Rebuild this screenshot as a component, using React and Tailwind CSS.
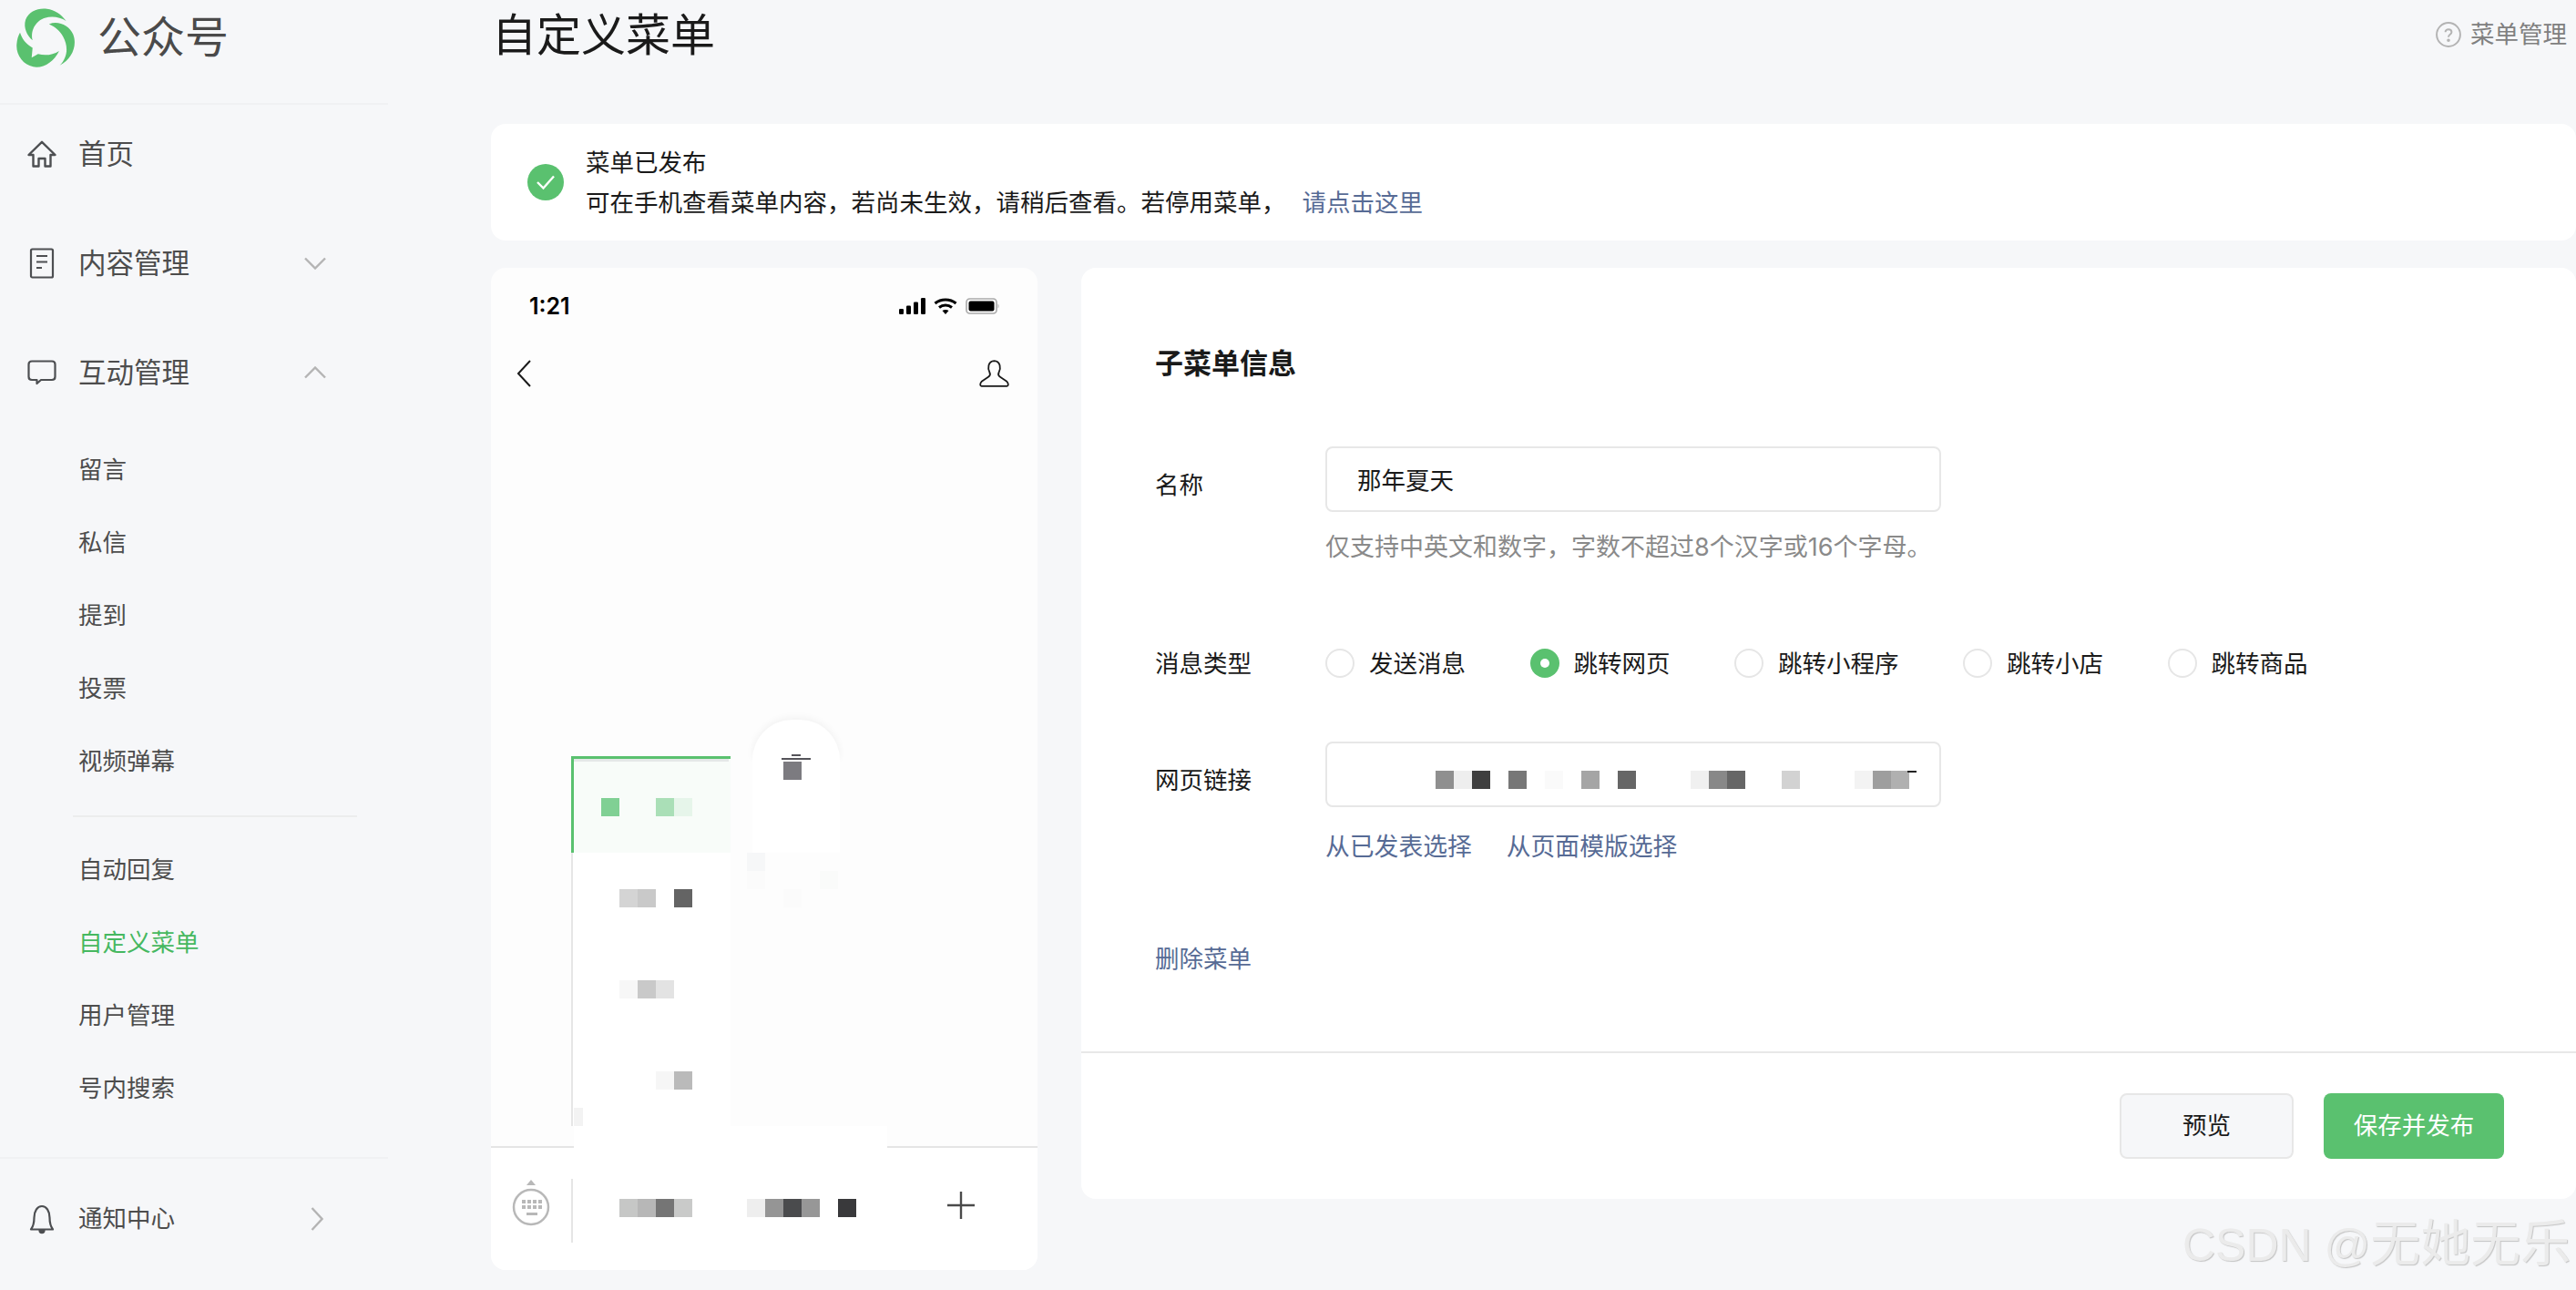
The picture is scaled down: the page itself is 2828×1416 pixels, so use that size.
const subItems = ['留言', '私信', '提到', '投票', '视频弹幕'];
const subItems2 = ['自动回复', '自定义菜单', '用户管理', '号内搜索'];
const radios = [
  { label: '发送消息' },
  { label: '跳转网页', checked: true },
  { label: '跳转小程序' },
  { label: '跳转小店' },
  { label: '跳转商品' },
];

function Logo() {
  return (
    <svg viewBox="50 25 200 200" className="w-[67px] h-[67px] shrink-0 fill-[#5ac16f]">
      <path d="M106 133C88 118 75 92 83 66 93 38 125 26 153 30 178 33 200 47 216 70 196 57 170 53 146 60 122 67 97 96 106 133Z" />
      <path d="M160 80C190 68 226 84 239 114 253 150 236 195 195 215 221 190 224 153 206 121 197 103 180 89 160 80Z" />
      <path d="M65 108C70 126 84 146 106 158L103 190 124 178C146 184 172 182 193 168 176 203 142 226 108 220 74 213 51 180 54 146 55 131 59 119 65 108Z" />
    </svg>
  );
}

function HomeIcon() {
  return (
    <svg viewBox="0 0 32 30" className="w-8 h-[30px] fill-none stroke-[#4d4f52] stroke-[2.4]">
      <path d="M1.5 16 16 1.8 30.5 16H25.5V28.5H19.5V20H12.5V28.5H6.5V16Z" strokeLinejoin="round" />
    </svg>
  );
}

function DocIcon() {
  return (
    <svg viewBox="0 0 28 34" className="w-7 h-[34px] fill-none stroke-[#4d4f52] stroke-[2.2]">
      <rect x="2" y="1.5" width="24" height="31" rx="1.5" />
      <path d="M8 9H20M8 15.5H20M8 22H14" />
    </svg>
  );
}

function ChatIcon() {
  return (
    <svg viewBox="0 0 32 28" className="w-8 h-7 fill-none stroke-[#4d4f52] stroke-[2.2]">
      <path d="M5 1.5H27C29 1.5 30.5 3 30.5 5V18.5C30.5 20.5 29 22 27 22H15L10.5 26V22H5C3 22 1.5 20.5 1.5 18.5V5C1.5 3 3 1.5 5 1.5Z" strokeLinejoin="round" />
    </svg>
  );
}

function BellIcon() {
  return (
    <svg viewBox="0 0 28 33" className="w-7 h-[33px] fill-none stroke-[#4d4f52] stroke-[2.2]">
      <path d="M2 27.5C5 23.5 5.5 20 5.5 14.5 5.5 7.5 9 2 14 2S22.5 7.5 22.5 14.5C22.5 20 23 23.5 26 27.5Z" strokeLinejoin="round" />
      <path d="M11.5 28.5C11.5 32 16.5 32 16.5 28.5Z" className="fill-[#4d4f52]" />
    </svg>
  );
}

function Chevron({ d, w, h }) {
  return (
    <svg viewBox={`0 0 ${w} ${h}`} width={w} height={h} className="fill-none stroke-[#b4b4b4] stroke-[2.4]">
      <path d={d} />
    </svg>
  );
}

function NavRow({ icon, label, arrow, small }) {
  return (
    <div className="h-20 flex items-center relative">
      <div className="w-[86px] shrink-0 pl-[30px]">
        <div className="w-8 flex justify-center">{icon}</div>
      </div>
      <span className={small ? 'text-[26.5px] text-[#4d4d4d]' : 'text-[30.5px] text-[#4d4d4d]'}>{label}</span>
      <div className="absolute left-[334px] top-0 bottom-0 flex items-center">{arrow}</div>
    </div>
  );
}

function SubRow({ label }) {
  const active = label === '自定义菜单';
  return (
    <div className={active ? 'h-20 pl-[86px] flex items-center text-[26.5px] text-[#46b860]' : 'h-20 pl-[86px] flex items-center text-[26.5px] text-[#4d4d4d]'}>
      {label}
    </div>
  );
}

function Sidebar() {
  return (
    <aside className="w-[539px] shrink-0">
      <div className="w-[426px] h-[115px] border-b-2 border-[#f0f1f3] pl-[17px] pt-[8px] flex items-start gap-[23px]">
        <Logo />
        <span className="text-[48px] leading-[60px] mt-[3px] text-[#4a4a4a]">公众号</span>
      </div>
      <div className="w-[426px] pt-[14px]">
        <NavRow icon={<HomeIcon />} label="首页" />
        <div className="h-10" />
        <NavRow icon={<DocIcon />} label="内容管理" arrow={<Chevron w={24} h={14} d="M1 1.5 12 12.5 23 1.5" />} />
        <div className="h-10" />
        <NavRow icon={<ChatIcon />} label="互动管理" arrow={<Chevron w={24} h={14} d="M1 12.5 12 1.5 23 12.5" />} />
        <div className="h-[27px]" />
        {subItems.map((s) => <SubRow key={s} label={s} />)}
        <div className="ml-[80px] w-[312px] h-[2px] bg-[#eceded] mt-[19px] mb-[18px]" />
        {subItems2.map((s) => <SubRow key={s} label={s} />)}
        <div className="h-[2px] bg-[#f0f1f3] mt-[35px] mb-[26px]" />
        <NavRow small icon={<BellIcon />} label="通知中心" arrow={<div className="ml-[7px]"><Chevron w={14} h={26} d="M1.5 1 12.5 13 1.5 25" /></div>} />
      </div>
    </aside>
  );
}

// one blurred patch of the screenshot: a run of 20px squares, null leaves a gap
function Mosaic({ cells }) {
  return (
    <div className="flex">
      {cells.map((c, i) => <div key={i} className={`w-5 h-5 ${c || ''}`} />)}
    </div>
  );
}

function StatusIcons() {
  return (
    <div className="flex items-center gap-[9px]">
      <svg viewBox="0 0 29 18" className="w-[29px] h-[18px] fill-black">
        <rect x="0" y="12" width="5" height="6" rx="1.2" />
        <rect x="8" y="8.5" width="5" height="9.5" rx="1.2" />
        <rect x="16" y="4.5" width="5" height="13.5" rx="1.2" />
        <rect x="24" y="0" width="5" height="18" rx="1.2" />
      </svg>
      <svg viewBox="0 0 26 18" className="w-[26px] h-[18px] fill-none stroke-black stroke-[3]">
        <path d="M1.5 6C8 0.5 18 0.5 24.5 6" />
        <path d="M6 10.5C10 7.2 16 7.2 20 10.5" />
        <path d="M13 18 9.5 14C11.5 12.7 14.5 12.7 16.5 14Z" className="fill-black stroke-none" />
      </svg>
      <svg viewBox="0 0 37 18" className="w-[37px] h-[18px]">
        <rect x="1" y="1" width="33" height="16" rx="3.5" className="fill-none stroke-[#a9a9a9] stroke-[1.6]" />
        <rect x="3.5" y="3.5" width="28" height="11" rx="2" className="fill-black" />
        <path d="M35.5 6.5C37 7.5 37 10.5 35.5 11.5Z" className="fill-[#b5b5b5]" />
      </svg>
    </div>
  );
}

function SubMenu() {
  return (
    <div className="absolute left-[88px] top-[400px] w-[175px]">
      <div className="h-[106px] border-t-[3px] border-l-[3px] border-[#5ac16f] bg-[#f8fcf9]">
        <div className="h-[3px] w-[170px] bg-[#e5e8e8]" />
        <div className="pl-[30px] pt-[40px]">
          <Mosaic cells={['bg-[#80d094]', null, null, 'bg-[#aadfb7]', 'bg-[#e6f5ea]']} />
        </div>
      </div>
      <div className="h-[100px] border-l-2 border-[#e6e6e6] bg-white pl-[31px] pt-[40px]">
        <Mosaic cells={[null, 'bg-[#d4d4d4]', 'bg-[#c9c9c9]', null, 'bg-[#646464]']} />
      </div>
      <div className="h-[100px] border-l-2 border-[#e6e6e6] bg-white pl-[31px] pt-[40px]">
        <Mosaic cells={[null, 'bg-[#f7f7f7]', 'bg-[#c9c9c9]', 'bg-[#e3e3e3]']} />
      </div>
      <div className="h-[100px] border-l-2 border-[#e6e6e6] bg-white pl-[31px] pt-[40px] relative">
        <Mosaic cells={[null, null, null, 'bg-[#f6f6f6]', 'bg-[#bababa]']} />
        <div className="absolute left-[1px] bottom-0 w-[10px] h-5 bg-[#f3f3f3]" />
      </div>
    </div>
  );
}

function DeleteBubble() {
  return (
    <div className="absolute left-[287px] top-[360px] w-[96px]">
      <div className="h-[44px] rounded-t-[48px] bg-white shadow-[0_-2px_8px_rgba(0,0,0,0.05)] pt-[38px] flex flex-col items-center">
        <div className="w-[10px] h-[2px] bg-[#55545a]" />
        <div className="w-[32px] h-[2px] mt-[2px] bg-[#55545a]" />
      </div>
      <div className="h-[102px] bg-white pt-[2px] pl-[34px]">
        <div className="w-5 h-5 bg-[#7c7b80]" />
      </div>
      <div className="-ml-[6px]">
        <Mosaic cells={['bg-[#f6f7f8]']} />
        <Mosaic cells={['bg-[#fbfbfb]', null, null, null, 'bg-[#fafbfa]']} />
        <Mosaic cells={[null, null, 'bg-[#fbfbfb]']} />
      </div>
    </div>
  );
}

function Phone() {
  return (
    <div className="w-[600px] h-[1100px] shrink-0 rounded-2xl bg-[#fdfdfd] overflow-hidden flex flex-col">
      <div className="h-10 mt-[23px] px-[42px] flex items-center justify-between">
        <span className="text-[25px] font-semibold text-black font-['Inter',sans-serif]">1:21</span>
        <div className="-mt-[2px]"><StatusIcons /></div>
      </div>
      <div className="h-10 mt-[33px] pl-[28px] pr-[31px] flex items-center justify-between">
        <svg viewBox="0 0 16 32" className="w-4 h-8 fill-none stroke-[#1a1a1a] stroke-[2]">
          <path d="M15 2 2 16 15 30" />
        </svg>
        <svg viewBox="0 0 33 30" className="w-[33px] h-[30px] fill-none stroke-[#1a1a1a] stroke-[1.8]" strokeLinejoin="round">
          <path d="M11.5 14C9 9.5 9.5 1.5 16.5 1.2 23.5 1.5 24 9.5 21.5 14 20.5 16 21 17.5 23 18.8L30 23.5C32 25 32.5 28.8 30.5 28.8H2.5C0.5 28.8 1 25 3 23.5L10 18.8C12 17.5 12.5 16 11.5 14Z" />
        </svg>
      </div>
      <div className="flex-1 relative z-10">
        <SubMenu />
        <DeleteBubble />
        <div className="absolute left-[91px] -bottom-[2px] w-[344px] h-[24px] bg-white" />
      </div>
      <div className="h-[136px] bg-white border-t-2 border-[#e5e5e5] flex items-start">
        <svg viewBox="0 0 44 56" className="w-[44px] h-14 ml-[22px] mt-[34px]">
          <path d="M17 7 22 1 27 7Z" className="fill-[#b8b8b8]" />
          <circle cx="22" cy="31" r="19" className="fill-white stroke-[#b8b8b8] stroke-[2.5]" />
          <path d="M12 23h4v4h-4zM18 23h4v4h-4zM24 23h4v4h-4zM30 23h4v4h-4zM12 29h4v4h-4zM18 29h4v4h-4zM24 29h4v4h-4zM30 29h4v4h-4zM17 37h12v3h-12z" className="fill-[#b8b8b8]" />
        </svg>
        <div className="w-[2px] h-[70px] mt-[34px] ml-[22px] bg-[#e5e5e5]" />
        <div className="mt-[56px] ml-[51px]">
          <Mosaic cells={['bg-[#c6c7c6]', 'bg-[#b7b7b7]', 'bg-[#757575]', 'bg-[#c9cac9]']} />
        </div>
        <div className="mt-[56px] ml-[60px]">
          <Mosaic cells={['bg-[#eeeeee]', 'bg-[#959595]', 'bg-[#4a4b4d]', 'bg-[#979797]', null, 'bg-[#39393b]']} />
        </div>
        <svg viewBox="0 0 30 30" className="w-[30px] h-[30px] ml-[100px] mt-[48px] stroke-[#4a4a4a] stroke-[2.4]">
          <path d="M15 0V30M0 15H30" />
        </svg>
      </div>
    </div>
  );
}

function Field({ label, children, className }) {
  return (
    <div className={`flex items-start ${className}`}>
      <div className="w-[187px] shrink-0 mt-[22px] leading-10 text-[#1a1a1a]">{label}</div>
      {children}
    </div>
  );
}

function Editor() {
  return (
    <div className="flex-1 h-[1022px] rounded-2xl bg-white flex flex-col text-[26.5px]">
      <div className="flex-1 pl-[81px] pt-[84px]">
        <div className="leading-[42px] text-[31px] font-semibold text-[#1a1a1a]">子菜单信息</div>
        <Field label="名称" className="mt-[70px]">
          <div className="w-[676px] h-[72px] border-2 border-[#e7e7e7] rounded-lg pl-[33px] pt-[4px] flex items-center text-[#1a1a1a]">那年夏天</div>
        </Field>
        <div className="ml-[187px] mt-[19px] leading-10 text-[27px] text-[#8a8a8a]">仅支持中英文和数字，字数不超过8个汉字或16个字母。</div>
        <div className="flex items-center mt-[88px] h-10">
          <div className="w-[187px] shrink-0 text-[#1a1a1a]">消息类型</div>
          <div className="flex items-center gap-[70.5px] -mt-[2px]">
            {radios.map((r) => (
              <label key={r.label} className="flex items-center gap-4 text-[#1a1a1a]">
                {r.checked ? (
                  <span className="w-8 h-8 rounded-full bg-[#5ac16f] flex items-center justify-center">
                    <span className="w-[10px] h-[10px] rounded-full bg-white" />
                  </span>
                ) : (
                  <span className="w-8 h-8 rounded-full border-2 border-[#e6e6e6] bg-white" />
                )}
                <span className="mt-[2px]">{r.label}</span>
              </label>
            ))}
          </div>
        </div>
        <Field label="网页链接" className="mt-[65px]">
          <div className="w-[676px] h-[72px] border-2 border-[#e7e7e7] rounded-lg pl-[119px] pt-[30px] relative">
            <Mosaic cells={['bg-[#8f8f8f]', 'bg-[#eeeeee]', 'bg-[#3f3f3f]', null, 'bg-[#777777]', null, 'bg-[#fafafa]', null, 'bg-[#a5a5a5]', null, 'bg-[#666666]', null, null, null, 'bg-[#f0f0f0]', 'bg-[#888888]', 'bg-[#666666]', null, null, 'bg-[#d2d2d2]', null, null, null, 'bg-[#f3f3f3]', 'bg-[#9e9e9e]', 'bg-[#b0b0b0]']} />
            <div className="absolute left-[637px] top-[30px] w-[10px] h-[2px] bg-[#222222]" />
          </div>
        </Field>
        <div className="ml-[187px] mt-[23px] leading-10 flex gap-[38px] text-[26.8px] text-[#576b95]">
          <span>从已发表选择</span>
          <span>从页面模版选择</span>
        </div>
        <div className="mt-[83px] leading-10 text-[#576b95]">删除菜单</div>
      </div>
      <div className="h-[162px] border-t-2 border-[#e8e8e8] pt-[44px] pr-[79px] flex justify-end gap-[33px]">
        <button className="w-[191px] h-[72px] rounded-lg border-2 border-[#e7e7e7] bg-[#f6f7f9] text-[#1a1a1a]">预览</button>
        <button className="w-[198px] h-[72px] rounded-lg bg-[#5ac16f] text-white">保存并发布</button>
      </div>
    </div>
  );
}

export default function App() {
  return (
    <div className="relative w-[2828px] h-[1416px] overflow-hidden flex bg-[#f6f7f9] font-['Inter','Noto_Sans_CJK_SC',sans-serif]">
      <Sidebar />
      <main className="flex-1 flex flex-col">
        <header className="h-[136px] flex items-start justify-between pl-[1px] pr-[10px]">
          <h1 className="text-[49px] leading-[78px] text-[#1a1a1a]">自定义菜单</h1>
          <div className="h-[76px] flex items-center gap-[10px] text-[#808080] text-[26.5px]">
            <svg viewBox="0 0 26 26" className="w-[28px] h-[28px] fill-none stroke-[#b3b3b3] stroke-[1.8]">
              <circle cx="13" cy="13" r="12" />
              <path d="M9.8 10.5C9.8 6.7 16.2 6.7 16.2 10.5 16.2 12.8 13 12.8 13 15.5" />
              <circle cx="13" cy="18.8" r="0.8" />
            </svg>
            菜单管理
          </div>
        </header>
        <div className="h-[128px] rounded-2xl bg-white pl-[40px] flex items-center gap-[24px] text-[26.5px] leading-[44.5px] text-[#1a1a1a]">
          <div className="w-10 h-10 rounded-full bg-[#5ac16f] flex items-center justify-center">
            <svg viewBox="0 0 22 18" className="w-[22px] h-[18px] fill-none stroke-white stroke-[2.4]">
              <path d="M2 9 8.5 15.5 20 2.5" />
            </svg>
          </div>
          <div>
            <div>菜单已发布</div>
            <div>
              可在手机查看菜单内容，若尚未生效，请稍后查看。若停用菜单，
              <span className="ml-[18px] text-[#576b95]">请点击这里</span>
            </div>
          </div>
        </div>
        <div className="flex gap-[48px] mt-[30px]">
          <Phone />
          <Editor />
        </div>
      </main>
      <div className="absolute left-[2396px] top-[1330px] whitespace-nowrap leading-[70px] flex items-baseline text-[#ebebeb] [text-shadow:1px_1px_1px_#c4c4c4] font-['Liberation_Sans','Noto_Sans_CJK_SC',sans-serif]">
        <span className="text-[50px] whitespace-pre">CSDN @</span>
        <span className="text-[55px]">无她无乐</span>
      </div>
    </div>
  );
}
